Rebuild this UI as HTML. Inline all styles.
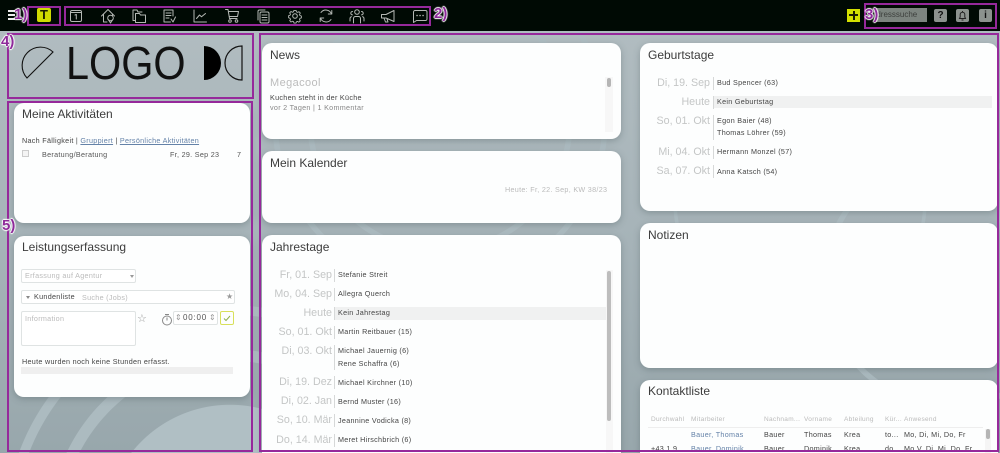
<!DOCTYPE html>
<html><head><meta charset="utf-8"><style>
*{box-sizing:border-box}
html,body{margin:0;padding:0;overflow:hidden;width:1000px;height:453px}
#p{position:absolute;left:0;top:0;width:1000px;height:453px;overflow:hidden;font-family:"Liberation Sans",sans-serif;color:#333;
background:
radial-gradient(circle at 230px 530px,#b0bfc4 125px,rgba(174,189,194,0) 125.5px),
radial-gradient(circle at 215px 259px,#b0bfc4 20px,rgba(174,189,194,0) 20.5px),
radial-gradient(circle at 230px 530px,rgba(174,189,194,0) 169px,rgba(174,189,194,.9) 169.5px,rgba(174,189,194,.9) 180.5px,rgba(174,189,194,0) 181px,rgba(174,189,194,0) 215px,rgba(174,189,194,.9) 215.5px,rgba(174,189,194,.9) 224.5px,rgba(174,189,194,0) 225px),
radial-gradient(circle at 440px 121px,rgba(174,189,194,0) 127px,rgba(174,189,194,.9) 127.5px,rgba(174,189,194,.9) 132.5px,rgba(174,189,194,0) 133px,rgba(174,189,194,0) 162px,rgba(174,189,194,.9) 162.5px,rgba(174,189,194,.9) 167.5px,rgba(174,189,194,0) 168px),
radial-gradient(circle at 950px 281px,rgba(174,189,194,0) 122px,rgba(174,189,194,.9) 122.5px,rgba(174,189,194,.9) 127.5px,rgba(174,189,194,0) 128px),
radial-gradient(circle at 800px 201px,rgba(174,189,194,0) 123px,rgba(174,189,194,.9) 123.5px,rgba(174,189,194,.9) 126.5px,rgba(174,189,194,0) 127px),
linear-gradient(#b2bdc1,#a7b4b9 50%,#98a7ac)}
.a{position:absolute;white-space:nowrap}
.card{position:absolute;background:#fdfefe;border-radius:10px;box-shadow:0 2px 7px rgba(70,85,90,.35)}
.h{position:absolute;font-size:12px;color:#3c3c3c;white-space:nowrap;line-height:14px}
.t{position:absolute;font-size:7.2px;letter-spacing:.3px;color:#444;white-space:nowrap;line-height:10px}
.d{position:absolute;font-size:10.7px;color:#c4c6c6;white-space:nowrap;line-height:13px;text-align:right}
.v{position:absolute;width:1px;background:#d6d8d8}
.f{position:absolute;border:1px solid #dfe3e3;border-radius:2px;background:#fff}
.g{color:#bbb}
.fr{position:absolute;border:2px solid #96299b;z-index:5}
.l{position:absolute;z-index:6;font-weight:bold;font-size:15px;line-height:16px;color:#8e2a9a;text-shadow:0 0 1px #fff,1px 0 1px #fff,-1px 0 1px #fff,0 1px 1px #fff,0 -1px 1px #fff}
svg.i{position:absolute;top:8px;width:16px;height:16px;fill:none;stroke:#b4b8b4;stroke-width:1;stroke-linecap:round;stroke-linejoin:round}
</style></head><body><div id="p">
<div class="a" style="left:0;top:0;width:1000px;height:31px;background:#000a04"></div>
<div class="a" style="left:8px;top:10px;width:7px;height:1.500px;background:#eee"></div>
<div class="a" style="left:8px;top:14px;width:7px;height:1.500px;background:#eee"></div>
<div class="a" style="left:8px;top:18px;width:7px;height:1.500px;background:#eee"></div>

<div class="a" style="left:37px;top:8px;width:14px;height:14px;background:#cfdb00;border-radius:2px"></div>
<div class="a" style="left:37px;top:8px;width:14px;height:14px;line-height:14px;text-align:center;font-weight:bold;font-size:13px;color:#1a1c00">T</div>

<svg class="i" style="left:68px" viewBox="0 0 16 16"><rect x="2.500" y="2.500" width="11" height="11" rx="1.500"/><path d="M2.500 4.500h11M7 7l1.300-.6v4.600"/></svg>
<svg class="i" style="left:100px" viewBox="0 0 16 16"><path d="M1.500 8 8 1.500 14.500 8M3.500 6.500V14H7M12.500 6.500V7.500"/><circle cx="10.500" cy="10" r="2.800"/><path d="M8.500 11.800 10.500 15 12.500 11.800"/></svg>
<svg class="i" style="left:131px" viewBox="0 0 16 16"><path d="M4.500 12.500H2V2h4l1 2h4M4.500 14.500V5.500h4l1 1.500h5v7.500z"/></svg>
<svg class="i" style="left:161px" viewBox="0 0 16 16"><path d="M9.500 14H3V2h9v6M5 5h5M5 7.500h5M5 10h3M10 11l2 3 2.500-5"/></svg>
<svg class="i" style="left:192px" viewBox="0 0 16 16"><path d="M2 2v12h12.500M4.500 10.500l3-3.500 2 1.800 4-3.300"/></svg>
<svg class="i" style="left:224px" viewBox="0 0 16 16"><path d="M1.500 1.500h2.500l1.500 9h7.500M4.500 3.500h10l-1 5H5.300"/><circle cx="6" cy="13" r="1.300"/><circle cx="12.500" cy="13" r="1.300"/></svg>
<svg class="i" style="left:255px" viewBox="0 0 16 16"><path d="M3 12V3.500a1.500 1.500 0 0 1 1.500-1.500H10"/><rect x="5" y="4" width="9" height="11" rx="1.500"/><path d="M7 7h5M7 9.500h5M7 12h5"/></svg>
<svg class="i" style="left:287px" viewBox="0 0 16 16"><circle cx="8" cy="8" r="2.300"/><path d="M6.800 1.800h2.400l.4 1.600 1.300.6 1.500-.8 1.500 1.600-.9 1.400.5 1.300 1.600.5v2.200l-1.600.4-.5 1.300.9 1.500-1.600 1.500-1.400-.9-1.300.5-.4 1.300H6.800l-.4-1.500-1.300-.5-1.500.9-1.500-1.600.9-1.400-.6-1.300-1.500-.4V7.700l1.500-.4.6-1.300-.9-1.500 1.500-1.500 1.500.9 1.300-.6z" transform="translate(.8 .8) scale(.9)"/></svg>
<svg class="i" style="left:318px" viewBox="0 0 16 16"><path d="M13.500 6A6 6 0 0 0 3 4.500M2.500 10A6 6 0 0 0 13 11.500M13.800 2.500V6h-3.500M2.200 13.500V10h3.500"/></svg>
<svg class="i" style="left:349px" viewBox="0 0 16 16"><circle cx="8" cy="4" r="2.300"/><path d="M4.500 15V10.500a2 2 0 0 1 2-2h3a2 2 0 0 1 2 2V15"/><path d="M3.500 3.500a1.700 1.700 0 0 0 0 3.400M12.500 3.500a1.700 1.700 0 0 1 0 3.400M1 13V10.500a2 2 0 0 1 1.500-1.800M15 13V10.500a2 2 0 0 0-1.500-1.800"/></svg>
<svg class="i" style="left:380px" viewBox="0 0 16 16"><path d="M1.500 6.500v3.500H6l8 3.500V2.500L6 6.500zM4 10l1.500 4H8L7 10.800"/></svg>
<svg class="i" style="left:412px" viewBox="0 0 16 16"><path d="M3 2.500h10.500a1.500 1.500 0 0 1 1.500 1.500v7a1.500 1.500 0 0 1-1.500 1.500H4.500l-3 2V4A1.500 1.500 0 0 1 3 2.500z"/><path d="M5 7.500h.1M8 7.500h.1M11 7.500h.1" stroke-width="1.500"/></svg>

<div class="a" style="left:847px;top:9px;width:13px;height:13px;background:#d3e000"></div>
<div class="a" style="left:847px;top:9px;width:13px;height:13px"><div class="a" style="left:2px;top:5.250px;width:9px;height:2px;background:#1c1f00"></div><div class="a" style="left:5.500px;top:2px;width:2px;height:9px;background:#1c1f00"></div></div>
<div class="a" style="left:876px;top:8px;width:51px;height:14px;background:#7c847f"></div>
<div class="a" style="left:871px;top:10px;font-size:8px;line-height:10px;color:#3c3f3c">Adresssuche</div>
<div class="a" style="left:934px;top:9px;width:13px;height:13px;background:#8c928e;border-radius:2px;color:#111;font:bold 10px/13px 'Liberation Sans';text-align:center">?</div>
<div class="a" style="left:956px;top:9px;width:13px;height:13px;background:#8c928e;border-radius:2px"></div>
<svg class="a" style="left:956px;top:9px" width="13" height="13" fill="none" stroke="#222"><path d="M3.500 9.500h6L8.800 8V5.500a2.300 2.300 0 0 0-4.600 0V8zM6.500 2v1M5.500 11h2"/></svg>
<div class="a" style="left:979px;top:9px;width:13px;height:13px;background:#8c928e;border-radius:2px;color:#111;font:bold 10px/13px 'Liberation Sans';text-align:center">i</div>

<!-- logo -->
<svg class="a" style="left:0;top:0" width="260" height="100" fill="none" stroke="#111" stroke-width="1.100">
<path d="M27 78 L53 52 A18.400 18.400 0 0 0 27 78 Z"/>
<path d="M204 46A17 17 0 0 1 204 80Z" fill="#000" stroke="none"/>
<path d="M242 46A17 17 0 0 0 242 80Z" stroke-width="1.200"/>
</svg>
<div class="a" style="left:66px;top:38px;font-size:46px;line-height:50px;color:#111;-webkit-text-stroke:1.800px #abb7bc;paint-order:stroke fill;transform:scaleX(.9);transform-origin:left">LOGO</div>

<!-- col 1 -->
<div class="card" style="left:14px;top:103px;width:236px;height:120px"></div>
<div class="h" style="left:22px;top:107px">Meine Aktivitäten</div>
<div class="t" style="left:22px;top:136px">Nach Fälligkeit | <span style="color:#6482a8;text-decoration:underline">Gruppiert</span> | <span style="color:#6482a8;text-decoration:underline">Persönliche Aktivitäten</span></div>
<div class="a" style="left:22px;top:150px;width:7px;height:7px;border:1px solid #ccc;background:#f4f4f4"></div>
<div class="t" style="left:42px;top:150px;color:#555">Beratung/Beratung</div>
<div class="t" style="left:170px;top:150px;color:#555">Fr, 29. Sep 23</div>
<div class="t" style="left:237px;top:150px;color:#555">7</div>

<div class="card" style="left:14px;top:236px;width:236px;height:161px"></div>
<div class="h" style="left:22px;top:240px">Leistungserfassung</div>
<div class="f" style="left:21px;top:269px;width:115px;height:14px"></div>
<div class="t g" style="left:25px;top:271px">Erfassung auf Agentur</div>
<div class="a" style="left:130px;top:275px;border:2.500px solid transparent;border-top:3px solid #999"></div>
<div class="f" style="left:21px;top:290px;width:214px;height:14px"></div>
<div class="a" style="left:26px;top:296px;border:2.500px solid transparent;border-top:3px solid #888"></div>
<div class="t" style="left:34px;top:292px;color:#444">Kundenliste</div>
<div class="t g" style="left:82px;top:293px">Suche (Jobs)</div>
<div class="a" style="left:226px;top:292px;font-size:8px;line-height:10px;color:#999">★</div>
<div class="f" style="left:21px;top:311px;width:115px;height:35px"></div>
<div class="t g" style="left:25px;top:314px">Information</div>
<div class="a" style="left:137px;top:312px;font-size:11px;line-height:13px;color:#999;font-family:'DejaVu Sans'">☆</div>
<svg class="a" style="left:161px;top:313px" width="12" height="13" fill="none" stroke="#888"><circle cx="6" cy="7.500" r="4.500"/><path d="M4 1.500h4M6 7.500V4.500"/></svg>
<div class="f" style="left:173px;top:311px;width:45px;height:14px"></div>
<div class="a" style="left:175px;top:313px;font-size:8px;line-height:10px;color:#999">⇕</div>
<div class="t" style="left:183px;top:313px;font-size:8px;letter-spacing:.8px;color:#555">00:00</div>
<div class="a" style="left:209px;top:313px;font-size:8px;line-height:10px;color:#999">⇕</div>
<div class="a" style="left:220px;top:311px;width:14px;height:14px;border:1px solid #d8e05a;border-radius:2px"></div>
<svg class="a" style="left:220px;top:311px" width="14" height="14" fill="none" stroke="#8fb04a"><path d="M4 7.500l2 2 4-4.500"/></svg>
<div class="t" style="left:22px;top:357px">Heute wurden noch keine Stunden erfasst.</div>
<div class="a" style="left:21px;top:367px;width:212px;height:7px;background:#efefef"></div>

<!-- col 2 -->
<div class="card" style="left:262px;top:43px;width:359px;height:96px"></div>
<div class="h" style="left:270px;top:48px">News</div>
<div class="a" style="left:270px;top:77px;font-size:11px;line-height:13px;letter-spacing:.4px;color:#bcbcbc">Megacool</div>
<div class="t" style="left:270px;top:93px">Kuchen steht in der Küche</div>
<div class="t" style="left:270px;top:103px;color:#888">vor 2 Tagen | 1 Kommentar</div>
<div class="a" style="left:605px;top:77px;width:8px;height:55px;background:#f7f7f7"></div>
<div class="a" style="left:607px;top:78px;width:4px;height:9px;background:#b5b5b5;border-radius:2px"></div>

<div class="card" style="left:262px;top:151px;width:359px;height:72px"></div>
<div class="h" style="left:270px;top:156px">Mein Kalender</div>
<div class="t g" style="left:505px;top:185px">Heute: Fr, 22. Sep, KW 38/23</div>

<div class="card" style="left:262px;top:235px;width:359px;height:218px;border-radius:10px 10px 0 0"></div>
<div class="h" style="left:270px;top:240px">Jahrestage</div>
<div class="a" style="left:334px;top:307px;width:272px;height:13px;background:#f0f1f1"></div>
<div class="d" style="left:262px;width:70px;top:269px">Fr, 01. Sep</div><div class="v" style="left:334px;top:269px;height:13px"></div><div class="t" style="left:338px;top:270px">Stefanie Streit</div>
<div class="d" style="left:262px;width:70px;top:288px">Mo, 04. Sep</div><div class="v" style="left:334px;top:288px;height:13px"></div><div class="t" style="left:338px;top:289px">Allegra Querch</div>
<div class="d" style="left:262px;width:70px;top:307px">Heute</div><div class="v" style="left:334px;top:307px;height:13px"></div><div class="t" style="left:338px;top:308px">Kein Jahrestag</div>
<div class="d" style="left:262px;width:70px;top:326px">So, 01. Okt</div><div class="v" style="left:334px;top:326px;height:13px"></div><div class="t" style="left:338px;top:327px">Martin Reitbauer (15)</div>
<div class="d" style="left:262px;width:70px;top:345px">Di, 03. Okt</div><div class="v" style="left:334px;top:345px;height:25px"></div><div class="t" style="left:338px;top:346px">Michael Jauernig (6)</div><div class="t" style="left:338px;top:359px">Rene Schaffra (6)</div>
<div class="d" style="left:262px;width:70px;top:376px">Di, 19. Dez</div><div class="v" style="left:334px;top:376px;height:13px"></div><div class="t" style="left:338px;top:378px">Michael Kirchner (10)</div>
<div class="d" style="left:262px;width:70px;top:395px">Di, 02. Jan</div><div class="v" style="left:334px;top:395px;height:13px"></div><div class="t" style="left:338px;top:397px">Bernd Muster (16)</div>
<div class="d" style="left:262px;width:70px;top:414px">So, 10. Mär</div><div class="v" style="left:334px;top:414px;height:13px"></div><div class="t" style="left:338px;top:416px">Jeannine Vodicka (8)</div>
<div class="d" style="left:262px;width:70px;top:434px">Do, 14. Mär</div><div class="v" style="left:334px;top:434px;height:13px"></div><div class="t" style="left:338px;top:435px">Meret Hirschbrich (6)</div>
<div class="a" style="left:606px;top:270px;width:7px;height:183px;background:#f7f7f7"></div>
<div class="a" style="left:607px;top:271px;width:4px;height:150px;background:#bdbdbd;border-radius:2px"></div>

<!-- col 3 -->
<div class="card" style="left:640px;top:43px;width:358px;height:168px"></div>
<div class="h" style="left:648px;top:48px">Geburtstage</div>
<div class="a" style="left:713px;top:96px;width:279px;height:12px;background:#f0f1f1"></div>
<div class="d" style="left:640px;width:70px;top:77px">Di, 19. Sep</div><div class="v" style="left:713px;top:77px;height:13px"></div><div class="t" style="left:717px;top:78px">Bud Spencer (63)</div>
<div class="d" style="left:640px;width:70px;top:96px">Heute</div><div class="v" style="left:713px;top:96px;height:13px"></div><div class="t" style="left:717px;top:97px">Kein Geburtstag</div>
<div class="d" style="left:640px;width:70px;top:115px">So, 01. Okt</div><div class="v" style="left:713px;top:115px;height:25px"></div><div class="t" style="left:717px;top:116px">Egon Baier (48)</div><div class="t" style="left:717px;top:128px">Thomas Löhrer (59)</div>
<div class="d" style="left:640px;width:70px;top:146px">Mi, 04. Okt</div><div class="v" style="left:713px;top:146px;height:13px"></div><div class="t" style="left:717px;top:147px">Hermann Monzel (57)</div>
<div class="d" style="left:640px;width:70px;top:165px">Sa, 07. Okt</div><div class="v" style="left:713px;top:165px;height:13px"></div><div class="t" style="left:717px;top:167px">Anna Katsch (54)</div>

<div class="card" style="left:640px;top:223px;width:358px;height:145px"></div>
<div class="h" style="left:648px;top:228px">Notizen</div>

<div class="card" style="left:640px;top:380px;width:358px;height:73px;border-radius:10px 10px 0 0"></div>
<div class="h" style="left:648px;top:384px">Kontaktliste</div>
<div class="t g" style="left:651px;top:415px;font-size:6.500px">Durchwahl</div>
<div class="t g" style="left:691px;top:415px;font-size:6.500px">Mitarbeiter</div>
<div class="t g" style="left:764px;top:415px;font-size:6.500px">Nachnam...</div>
<div class="t g" style="left:804px;top:415px;font-size:6.500px">Vorname</div>
<div class="t g" style="left:844px;top:415px;font-size:6.500px">Abteilung</div>
<div class="t g" style="left:885px;top:415px;font-size:6.500px">Kür...</div>
<div class="t g" style="left:904px;top:415px;font-size:6.500px">Anwesend</div>
<div class="a" style="left:648px;top:427px;width:335px;height:1px;background:#eee"></div>
<div class="t" style="left:691px;top:430px;color:#6482a8">Bauer, Thomas</div>
<div class="t" style="left:764px;top:430px">Bauer</div><div class="t" style="left:804px;top:430px">Thomas</div><div class="t" style="left:844px;top:430px">Krea</div><div class="t" style="left:885px;top:430px">to...</div><div class="t" style="left:904px;top:430px">Mo, Di, Mi, Do, Fr</div>
<div class="t" style="left:651px;top:444px;height:9px;line-height:9px">+43 1 9...</div>
<div class="t" style="left:691px;top:444px;height:9px;line-height:9px;color:#6482a8">Bauer, Dominik</div>
<div class="t" style="left:764px;top:444px;height:9px;line-height:9px">Bauer</div><div class="t" style="left:804px;top:444px;height:9px;line-height:9px">Dominik</div><div class="t" style="left:844px;top:444px;height:9px;line-height:9px">Krea</div><div class="t" style="left:885px;top:444px;height:9px;line-height:9px">do...</div><div class="t" style="left:904px;top:444px;height:9px;line-height:9px">Mo V, Di, Mi, Do, Fr</div>
<div class="a" style="left:985px;top:429px;width:6px;height:24px;background:#f5f5f5"></div>
<div class="a" style="left:986px;top:429px;width:4px;height:10px;background:#b5b5b5;border-radius:2px"></div>

<!-- frames -->
<div class="fr" style="left:27px;top:6px;width:34px;height:20px"></div>
<div class="fr" style="left:64px;top:6px;width:367px;height:20px"></div>
<div class="fr" style="left:864px;top:3px;width:133px;height:26px"></div>
<div class="fr" style="left:7px;top:33px;width:247px;height:66px"></div>
<div class="fr" style="left:7px;top:101px;width:246px;height:351px"></div>
<div class="fr" style="left:259px;top:33px;width:740px;height:419px"></div>
<div class="l" style="left:14px;top:7px">1)</div>
<div class="l" style="left:434px;top:6px">2)</div>
<div class="l" style="left:865px;top:7px">3)</div>
<div class="l" style="left:1px;top:34px">4)</div>
<div class="l" style="left:2px;top:218px">5)</div>
</div></body></html>
